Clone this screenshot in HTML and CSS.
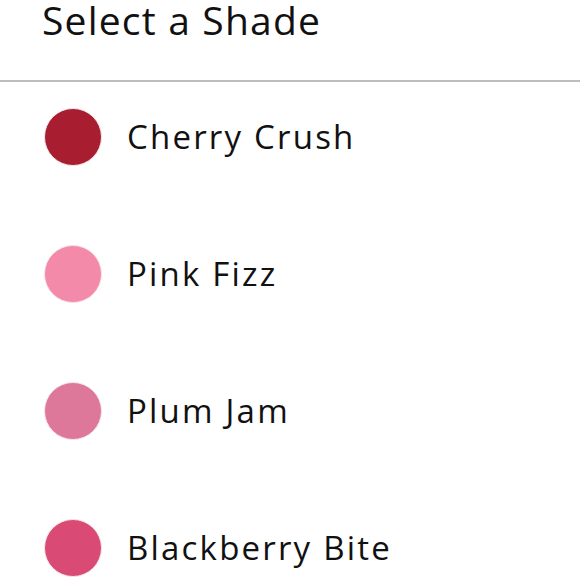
FILE: index.html
```html
<!DOCTYPE html>
<html>
<head>
<meta charset="utf-8">
<link rel="stylesheet" href="styles.css">
</head>
<body>
<div class="header"><h1 class="title">Select a Shade</h1></div>
<ul class="shades">
  <li class="shade"><span class="swatch cherry"></span><span class="name">Cherry Crush</span></li>
  <li class="shade"><span class="swatch pink"></span><span class="name">Pink Fizz</span></li>
  <li class="shade"><span class="swatch plum"></span><span class="name">Plum Jam</span></li>
  <li class="shade"><span class="swatch blackberry"></span><span class="name">Blackberry Bite</span></li>
</ul>
</body>
</html>
```
FILE: styles.css
```css
html, body { margin: 0; padding: 0; background: #fff; }
body { font-family: "Open Sans", Lato, sans-serif; color: #111; overflow: hidden; height: 580px; }
.header { height: 81px; border-bottom: 2px solid #bdbdbd; }
.title { margin: -1px 0 0 0; padding: 0 0 0 42px; font-size: 39px; font-weight: 400; line-height: 42px; letter-spacing: 1.2px; }
.shades { list-style: none; margin: 0; padding: 26px 0 0 44px; }
.shade { display: flex; align-items: center; gap: 26px; height: 58px; margin-bottom: 79px; }
.swatch { width: 56px; height: 56px; border-radius: 50%; border: 1px solid #f6e4e8; flex: none; }
.name { font-size: 33px; line-height: 52px; margin-bottom: 0; letter-spacing: 2.2px; margin-left: -1px; }
.cherry { background: #a81d30; }
.pink { background: #f38aa9; }
.plum { background: #dd789b; }
.blackberry { background: #d94a75; }
```
